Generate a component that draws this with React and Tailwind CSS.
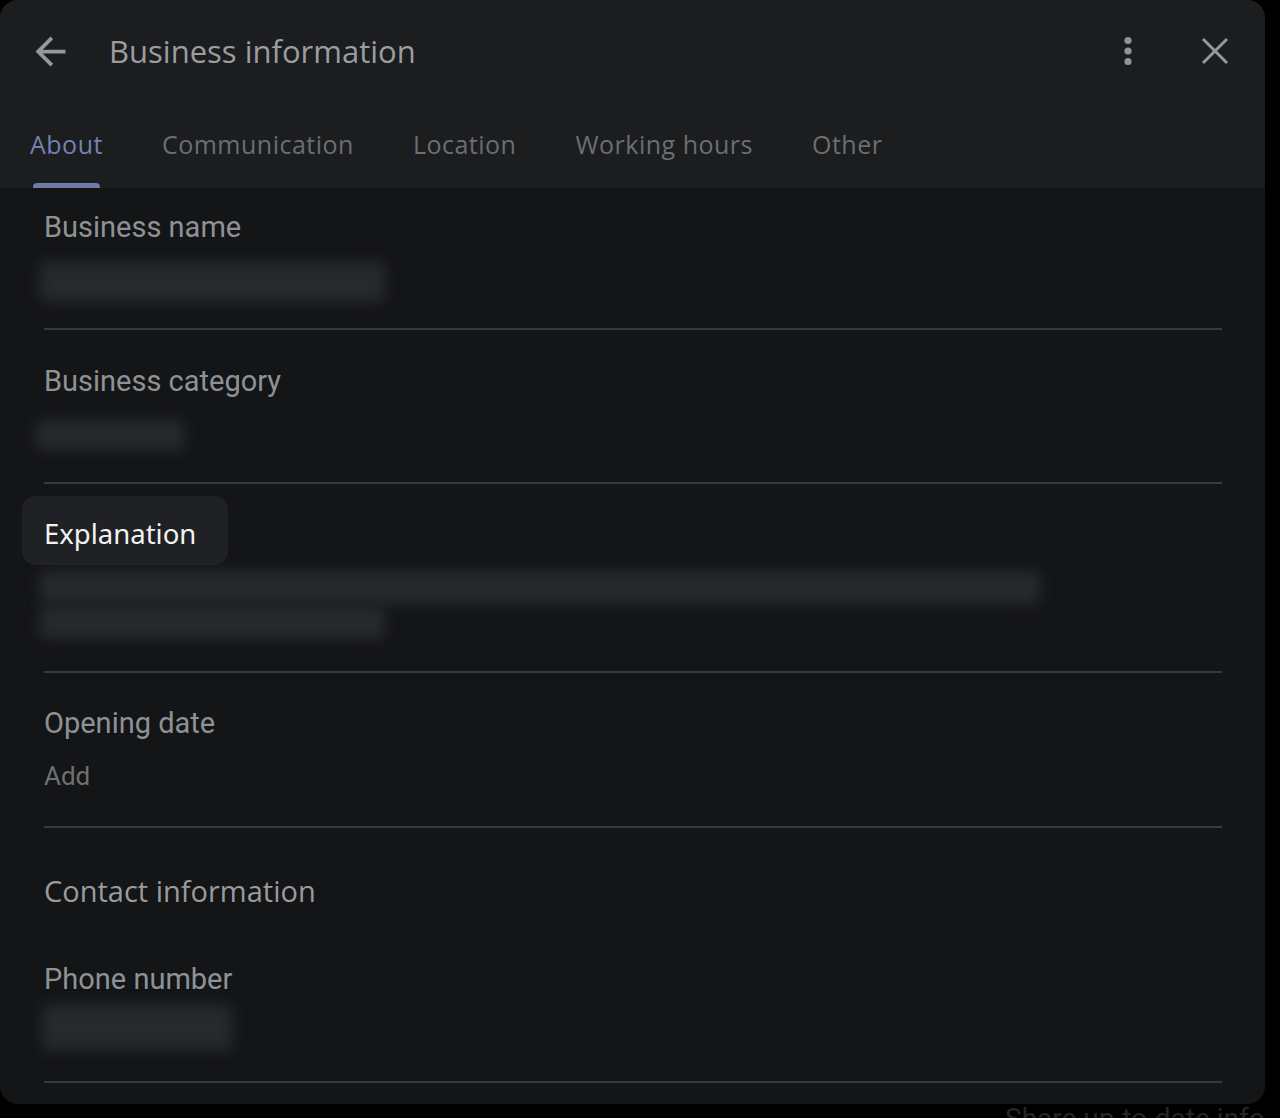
const tabs = ["About", "Communication", "Location", "Working hours", "Other"];

function Blur({ className }) {
  return <div className={"rounded-md bg-[#272a2d] blur-[7px] " + className} />;
}

function Divider() {
  return <div className="h-[2px] w-[1178px] bg-[#38393c]" />;
}

export default function App() {
  return (
    <div className="relative h-[1118px] w-[1280px] overflow-hidden bg-black font-['Roboto',sans-serif]">
      <div className="flex h-[1104px] w-[1265px] flex-col overflow-hidden rounded-[18px] bg-[#141517]">
        {/* header */}
        <div className="flex h-[188px] shrink-0 flex-col bg-[#1c1d1f]">
          <div className="flex h-[102px] items-center pl-[28px] pr-[36px]">
            <svg viewBox="0 0 24 24" className="h-[45px] w-[45px] fill-[#95989c]">
              <path d="M20 11H7.83l5.59-5.59L12 4l-8 8 8 8 1.41-1.41L7.83 13H20v-2z" />
            </svg>
            <h1 className="ml-[36px] font-['Open_Sans',sans-serif] text-[31px] leading-[40px] text-[#9a9da1]">
              Business information
            </h1>
            <div className="ml-auto flex items-center gap-[68px]">
              <svg viewBox="0 0 10 30" className="h-[30px] w-[10px] fill-[#929497]">
                <circle cx="5" cy="4.5" r="3.6" />
                <circle cx="5" cy="15" r="3.6" />
                <circle cx="5" cy="25.5" r="3.6" />
              </svg>
              <svg viewBox="0 0 28 28" className="h-[28px] w-[28px] stroke-[#95989c]" strokeWidth="3">
                <path d="M2 2l24 24M26 2L2 26" />
              </svg>
            </div>
          </div>
          <div className="flex flex-1 gap-[59px] pl-[30px] font-['Open_Sans',sans-serif] text-[25px] tracking-[0.5px]">
            {tabs.map((t, i) => (
              <div key={t} className="flex flex-col">
                <span
                  className={
                    "pt-[26px] leading-[32px] " +
                    (i === 0 ? "text-[#7482b2]" : "text-[#6b6e72]")
                  }
                >
                  {t}
                </span>
                {i === 0 && (
                  <div className="mx-[3px] mt-auto h-[5px] rounded-t-[4px] bg-[#6d7aaa]" />
                )}
              </div>
            ))}
          </div>
        </div>

        {/* body */}
        <div className="flex flex-col pl-[44px] text-[29px] text-[#8f9295]">
          <section className="pt-[23px]">
            <div className="leading-[32px]">Business name</div>
            <Blur className="-ml-[4px] mt-[19px] h-[40px] w-[345px]" />
            <div className="h-[26px]" />
            <Divider />
          </section>

          <section className="pt-[35px]">
            <div className="leading-[32px]">Business category</div>
            <Blur className="-ml-[8px] mt-[23px] h-[30px] w-[148px]" />
            <div className="h-[32px]" />
            <Divider />
          </section>

          <section className="pt-[12px]">
            <div className="-ml-[22px] flex h-[69px] w-[206px] items-center rounded-[14px] bg-[#202124] pl-[22px] pt-[6px] font-['Noto_Sans',sans-serif] text-[27.5px] text-[#f2f2f2]">
              Explanation
            </div>
            <Blur className="-ml-[4px] mt-[6px] h-[33px] w-[1000px]" />
            <Blur className="-ml-[4px] mt-[2px] h-[33px] w-[345px]" />
            <div className="h-[32px]" />
            <Divider />
          </section>

          <section className="pt-[34px]">
            <div className="leading-[32px]">Opening date</div>
            <div className="mt-[22px] text-[26px] leading-[30px] text-[#6e7073]">Add</div>
            <div className="h-[35px]" />
            <Divider />
          </section>

          <section className="pt-[45px]">
            <div className="font-['Open_Sans',sans-serif] text-[29px] font-medium leading-[36px] text-[#9a9b9d]">
              Contact information
            </div>
            <div className="mt-[54px] leading-[32px]">Phone number</div>
            <Blur className="-ml-[2px] mt-[10px] h-[45px] w-[190px]" />
            <div className="h-[31px]" />
            <Divider />
          </section>
        </div>
      </div>
      <div className="absolute left-[1005px] top-[1098px] text-[28px] text-[#262626]">
        Share up-to-date info
      </div>
    </div>
  );
}
